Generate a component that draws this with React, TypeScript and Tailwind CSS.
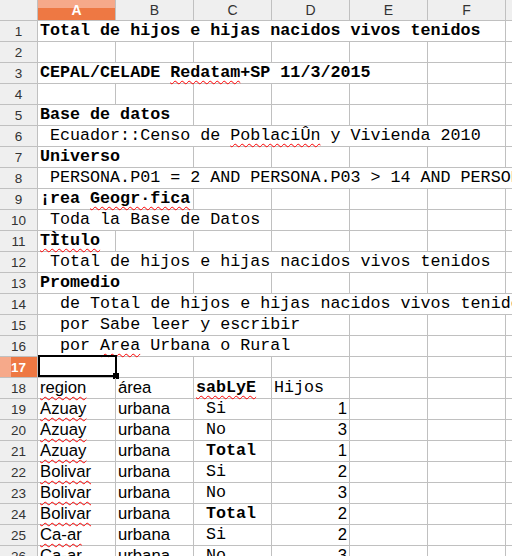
import type { ReactNode } from "react";

type Cell = {
  span?: number;
  content?: ReactNode;
  bold?: boolean;
  sans?: boolean;
  right?: boolean;
};

const COLS = ["A", "B", "C", "D", "E", "F", "G"];

// full class names so tailwind picks them up
const spanWidth: Record<number, string> = {
  1: "w-[78px]",
  2: "w-[156px]",
  3: "w-[234px]",
  4: "w-[312px]",
  5: "w-[390px]",
  6: "w-[468px]",
  7: "w-[546px]",
};

// spell-check squiggle
function Sp({ children }: { children: ReactNode }) {
  return (
    <span className="underline decoration-wavy decoration-[#ff0000] decoration-1 underline-offset-[3px] [text-decoration-skip-ink:none]">
      {children}
    </span>
  );
}

const data: [string, string, string, boolean, number][] = [
  ["Azuay", "urbana", "Si", false, 1],
  ["Azuay", "urbana", "No", false, 3],
  ["Azuay", "urbana", "Total", true, 1],
  ["Bolivar", "urbana", "Si", false, 2],
  ["Bolivar", "urbana", "No", false, 3],
  ["Bolivar", "urbana", "Total", true, 2],
  ["Ca-ar", "urbana", "Si", false, 2],
  ["Ca-ar", "urbana", "No", false, 3],
];

const rows: Cell[][] = [
  [{ span: 6, bold: true, content: "Total de hijos e hijas nacidos vivos tenidos" }],
  [],
  [
    {
      span: 5,
      bold: true,
      content: (
        <>
          CEPAL/CELADE <Sp>Redatam</Sp>+SP 11/3/2015
        </>
      ),
    },
  ],
  [],
  [{ span: 2, bold: true, content: "Base de datos" }],
  [
    {
      span: 6,
      content: (
        <>
          {" Ecuador::Censo de "}
          <Sp>PoblaciÛn</Sp> y Vivienda 2010
        </>
      ),
    },
  ],
  [{ span: 2, bold: true, content: "Universo" }],
  [{ span: 7, content: " PERSONA.P01 = 2 AND PERSONA.P03 > 14 AND PERSONA.P03 < 99" }],
  [
    {
      span: 2,
      bold: true,
      content: (
        <>
          {"¡rea "}
          <Sp>Geogr·fica</Sp>
        </>
      ),
    },
  ],
  [{ span: 3, content: " Toda la Base de Datos" }],
  [{ span: 1, bold: true, content: <Sp>TÌtulo</Sp> }],
  [{ span: 6, content: " Total de hijos e hijas nacidos vivos tenidos" }],
  [{ span: 2, bold: true, content: "Promedio" }],
  [{ span: 7, content: "  de Total de hijos e hijas nacidos vivos tenidos" }],
  [{ span: 4, content: "  por Sabe leer y escribir" }],
  [
    {
      span: 4,
      content: (
        <>
          {"  por "}
          <Sp>Area</Sp> Urbana o Rural
        </>
      ),
    },
  ],
  [],
  [
    { sans: true, content: <Sp>region</Sp> },
    { sans: true, content: "área" },
    { bold: true, content: <Sp>sabLyE</Sp> },
    { content: "Hijos" },
  ],
  ...data.map(([region, area, sab, bold, hijos]) => [
    { sans: true, content: <Sp>{region}</Sp> },
    { sans: true, content: area },
    { bold, content: " " + sab },
    { sans: true, right: true, content: hijos },
  ]),
];

function Row({ n, cells }: { n: number; cells: Cell[] }) {
  const used = cells.reduce((s, c) => s + (c.span ?? 1), 0);
  const filled = [...cells];
  for (let i = used; i < COLS.length; i++) filled.push({});
  const selected = n === 17;

  return (
    <div className="flex h-[21px] shrink-0 border-b border-[#c0c0c0]">
      <div
        className={
          selected
            ? "w-[38px] shrink-0 border-r border-[#c0c0c0] bg-linear-to-r from-[#f6a98a] from-30% to-[#ee7843] to-30% text-white font-bold text-center font-['Liberation_Sans'] text-[13.5px] leading-[21px]"
            : "w-[38px] shrink-0 border-r border-[#c0c0c0] bg-[#efefef] text-[#333333] text-center font-['Liberation_Sans'] text-[13.5px] leading-[21px]"
        }
      >
        {n}
      </div>
      {filled.map((c, i) => (
        <div
          key={i}
          className={`${spanWidth[c.span ?? 1]} relative shrink-0 border-r border-[#c0c0c0] px-[2px] leading-[20px] text-[16.7px] text-black whitespace-pre ${
            c.sans ? "font-['Liberation_Sans']" : "font-['Liberation_Mono']"
          } ${c.bold ? "font-bold" : ""} ${c.right ? "text-right" : ""}`}
        >
          {c.content}
          {selected && i === 0 && (
            <div className="absolute left-0 top-[-2px] w-[79px] h-[22px] border-2 border-black">
              <div className="absolute right-[-4px] bottom-[-4px] w-[6px] h-[6px] bg-black" />
            </div>
          )}
        </div>
      ))}
    </div>
  );
}

export default function App() {
  return (
    <div className="w-[512px] h-[556px] overflow-hidden bg-white flex flex-col">
      {/* Column header */}
      <div className="flex h-[21px] shrink-0 border-b border-[#c0c0c0] bg-[#efefef] font-['Liberation_Sans'] text-[14px] leading-[21px] text-[#333333]">
        <div className="w-[38px] shrink-0 border-r border-[#c0c0c0]" />
        {COLS.map((c) => (
          <div
            key={c}
            className={
              c === "A"
                ? "w-[78px] shrink-0 border-r border-[#c0c0c0] text-center text-white font-bold bg-linear-to-b from-[#f6a98a] from-40% to-[#ee7843] to-40%"
                : "w-[78px] shrink-0 border-r border-[#c0c0c0] text-center"
            }
          >
            {c}
          </div>
        ))}
      </div>

      {rows.map((cells, i) => (
        <Row key={i} n={i + 1} cells={cells} />
      ))}
    </div>
  );
}
